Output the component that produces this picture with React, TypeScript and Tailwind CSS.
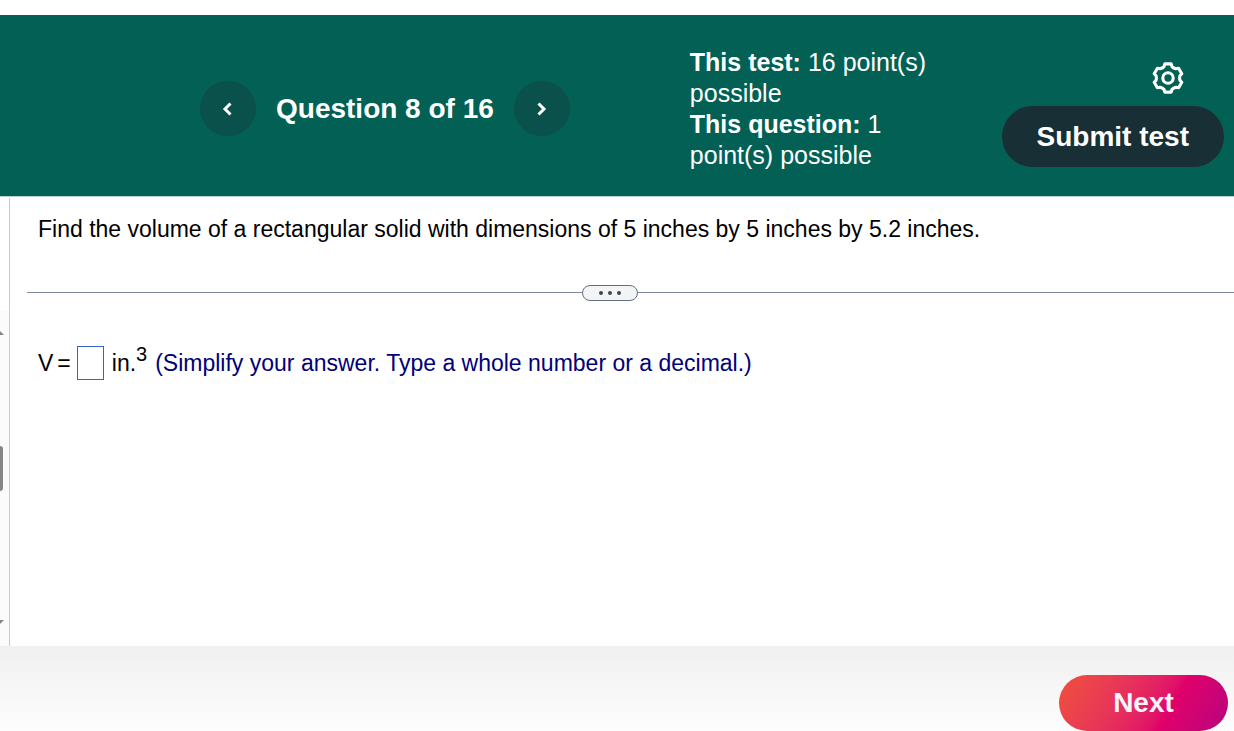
import React from 'react';

const Chevron: React.FC<{ direction: 'left' | 'right' }> = ({ direction }) => (
  <svg viewBox="0 0 16 16" className="h-4 w-4" fill="none" stroke="currentColor" strokeWidth="3" aria-hidden="true">
    <path d={direction === 'left' ? 'M10.5 2.5 L5 8 L10.5 13.5' : 'M4.5 2.5 L10 8 L4.5 13.5'} />
  </svg>
);

const Gear: React.FC = () => (
  <svg viewBox="-16 -16 32 32" className="h-8 w-8" fill="none" stroke="currentColor" strokeWidth="3.1" strokeLinejoin="round" aria-hidden="true">
    <path d="M-3.2 -14.1 L3.2 -14.1 L4 -11.4 Q5.6 -9.7 7.9 -9.2 L10.6 -9.8 L13.8 -4.3 L11.9 -2.2 Q11.2 0 11.9 2.2 L13.8 4.3 L10.6 9.8 L7.9 9.2 Q5.6 9.7 4 11.4 L3.2 14.1 L-3.2 14.1 L-4 11.4 Q-5.6 9.7 -7.9 9.2 L-10.6 9.8 L-13.8 4.3 L-11.9 2.2 Q-11.2 0 -11.9 -2.2 L-13.8 -4.3 L-10.6 -9.8 L-7.9 -9.2 Q-5.6 -9.7 -4 -11.4 Z" />
    <circle r="5.2" />
  </svg>
);

const Header: React.FC = () => {
  return (
    <header className="mt-[15px] flex items-start border-b border-[#b9cdd3] bg-[#036055] pt-8 pb-[25px] pl-[200px] pr-[10px] text-white">
      <nav className="mt-[34px] flex items-center gap-5" aria-label="Questions">
        <button aria-label="Previous question" className="flex h-[55px] w-14 items-center justify-center rounded-full bg-[#0b514b]">
          <Chevron direction="left" />
        </button>
        <h1 className="text-[28px] leading-8 font-bold whitespace-nowrap">Question 8 of 16</h1>
        <button aria-label="Next question" className="flex h-[55px] w-14 items-center justify-center rounded-full bg-[#0b514b]">
          <Chevron direction="right" />
        </button>
      </nav>
      <div className="ml-[120px] w-[240px] text-[25px] leading-[31px]">
        <p>
          <strong>This test:</strong> <span>16 point(s)</span> <span>possible</span>
        </p>
        <p>
          <strong>This question:</strong> <span>1</span> <span className="inline-block">point(s) possible</span>
        </p>
      </div>
      <div className="ml-auto flex flex-col items-end">
        <button aria-label="Settings" className="mt-[15px] mr-10">
          <Gear />
        </button>
        <button className="mt-3 h-[61px] rounded-full bg-[#182f36] px-[35px] text-[28px] font-bold whitespace-nowrap">
          Submit test
        </button>
      </div>
    </header>
  );
};

const ScrollStrip: React.FC = () => (
  <div className="mt-px flex w-[10px] shrink-0 flex-col border-r border-[#c5c9d3]" aria-hidden="true">
    <div className="h-28" />
    <div className="flex grow flex-col bg-[#fbfbfb] text-[#868686]">
      <svg viewBox="0 0 4 4" className="mt-[21px] h-1 w-1" fill="currentColor">
        <path d="M0 0 L4 4 H0 Z" />
      </svg>
      <div className="mt-[111px] h-[45px] w-[3px] rounded-r-[3px] bg-[#868686]" />
      <svg viewBox="0 0 4 4" className="mt-auto mb-[22px] h-1 w-1" fill="currentColor">
        <path d="M0 0 H4 L0 4 Z" />
      </svg>
    </div>
  </div>
);

const Question: React.FC = () => {
  return (
    <section className="min-w-0 grow text-[23px] leading-8 text-black">
      <p className="pt-4 pl-7">
        Find the volume of a rectangular solid with dimensions of 5 inches by 5 inches by 5.2 inches.
      </p>
      <div className="mt-10 ml-[17px] flex items-center">
        <div className="mb-px h-px grow bg-[#7f8a9e]" />
        <button aria-label="Resize panels" className="flex h-4 w-14 items-center justify-center gap-[5px] rounded-full border border-[#5f7085] bg-[#f3f4f6]">
          <span className="h-1 w-1 rounded-full bg-[#444]" />
          <span className="h-1 w-1 rounded-full bg-[#444]" />
          <span className="h-1 w-1 rounded-full bg-[#444]" />
        </button>
        <div className="mb-px h-px w-[596px] bg-[#7f8a9e]" />
      </div>
      <div className="mt-[45px] flex items-center pl-7">
        <label htmlFor="answer" className="flex gap-1">
          <span>V</span>
          <span>=</span>
        </label>
        <input id="answer" type="text" className="ml-1.5 h-[34px] w-[27px] border border-[#3366c4] bg-white text-center outline-none" />
        <span className="ml-2">
          in.<sup className="-top-2.5 text-xl leading-none">3</sup>
        </span>
        <span className="ml-2 text-[#000078]">(Simplify your answer. Type a whole number or a decimal.)</span>
      </div>
    </section>
  );
};

const App: React.FC = () => {
  return (
    <div className="flex min-h-screen flex-col bg-white font-['Liberation_Sans',Arial,sans-serif]">
      <Header />
      <main className="flex grow">
        <ScrollStrip />
        <Question />
      </main>
      <footer className="flex justify-end bg-linear-to-b from-[#f0f0f0] to-[#fdfdfd] pt-[29px] pr-1.5">
        <button className="h-14 w-[169px] rounded-full bg-linear-120 from-[#f0503a] via-[#e0006b] via-65% to-[#b8007c] text-[28px] font-bold text-[#f8f4fb]">
          Next
        </button>
      </footer>
    </div>
  );
};

export default App;
